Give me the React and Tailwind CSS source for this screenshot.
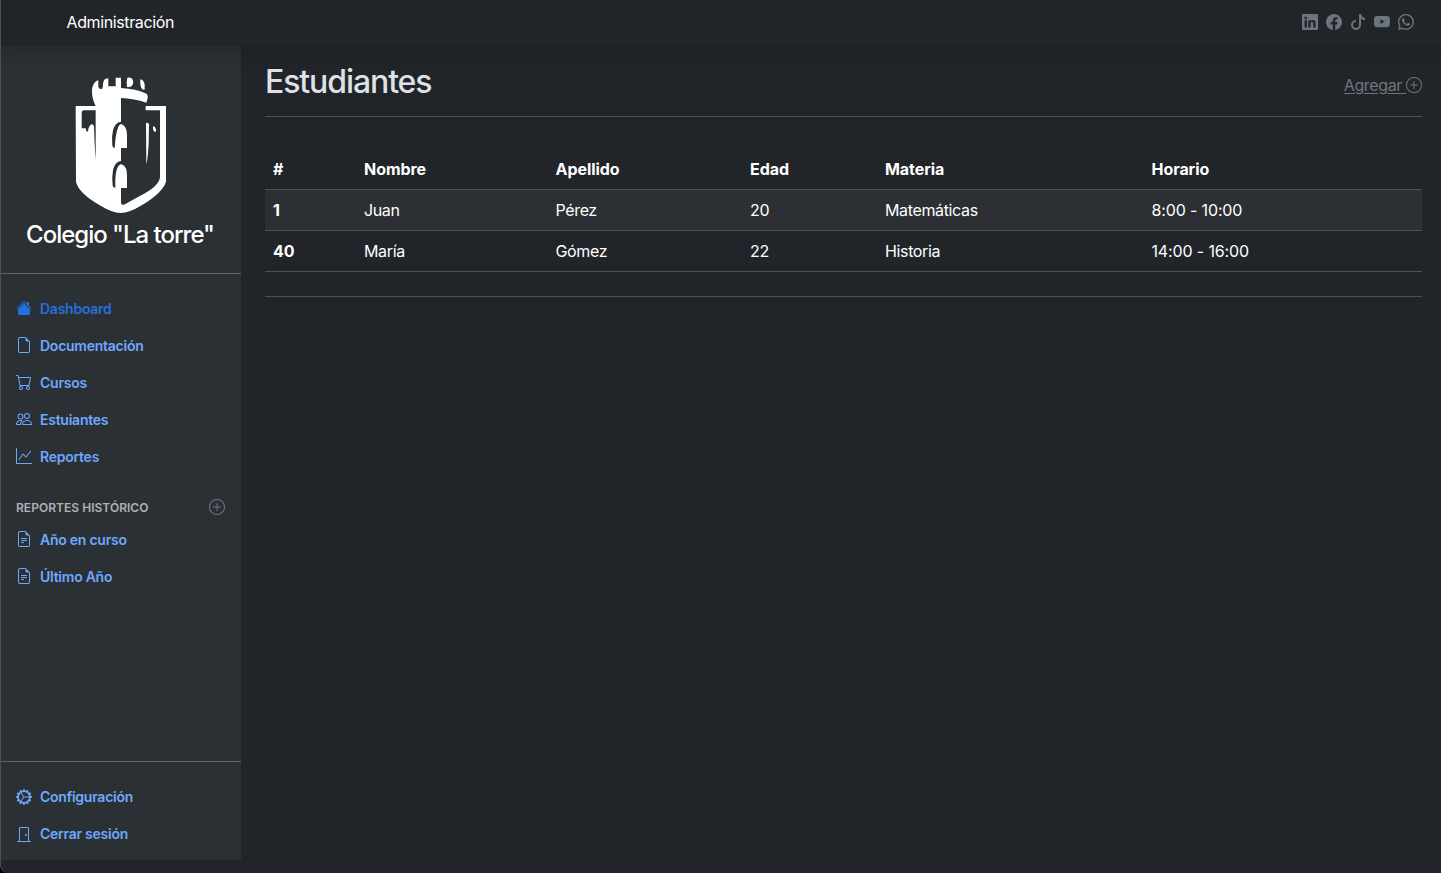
import {
  BsHouseFill, BsFileEarmark, BsCart, BsPeople, BsGraphUp, BsPlusCircle, BsFileEarmarkText,
  BsGearWideConnected, BsDoorClosed, BsLinkedin, BsFacebook, BsTiktok, BsYoutube, BsWhatsapp,
} from "react-icons/bs";

const mainLinks = [
  { label: "Dashboard", Icon: BsHouseFill, active: true },
  { label: "Documentación", Icon: BsFileEarmark },
  { label: "Cursos", Icon: BsCart },
  { label: "Estuiantes", Icon: BsPeople },
  { label: "Reportes", Icon: BsGraphUp },
];
const reportLinks = [
  { label: "Año en curso", Icon: BsFileEarmarkText },
  { label: "Último Año", Icon: BsFileEarmarkText },
];
const accountLinks = [
  { label: "Configuración", Icon: BsGearWideConnected },
  { label: "Cerrar sesión", Icon: BsDoorClosed },
];
const students = [
  ["1", "Juan", "Pérez", "20", "Matemáticas", "8:00 - 10:00"],
  ["40", "María", "Gómez", "22", "Historia", "14:00 - 16:00"],
];

function TowerLogo() {
  return (
    <svg viewBox="0 0 420 465" className="mr-[2px] h-[155px] w-[140px]" fill="#fff">
      <path d="M77 123H137C131 110 126 97 126 80C126 62 133 50 145 46V66Q148 73 155 73Q160 69 159 58Q160 43 168 41L175 40V64H197V38H213V69Q260 72 285 84Q295 88 293 100L289 113Q253 101 213 99V170Q195 172 189 196Q184 216 187 242Q190 250 194 249Q199 178 214 177Q231 184 231 210V249H213V288Q195 290 189 315Q185 340 188 362Q191 369 196 368Q194 298 215 298Q231 304 231 330V369H213V412Q213 424 226 417L268 394Q327 365 330 337V136H287V123H348V350Q338 383 275 421Q238 444 212 444Q187 444 148 420Q84 382 78 350Z" />
      <path fill="#2b3035" d="M101 136H137V285Q134 250 132 184Q128 174 121 180Q115 187 114 199Q109 204 107 190H95V144Q95 137 101 136Z" />
      <path d="M232 38Q246 35 249 47Q252 60 240 66H231Q228 52 232 38ZM271 43Q281 45 284 58V73Q279 78 273 67Q269 55 271 43ZM288 174Q292 171 297 177L296 235Q294 280 289 297ZM309 184Q315 183 318 193Q320 201 315 202Q308 197 309 184Z" />
    </svg>
  );
}

function NavList({ items, iconClass = "mb-0.5" }) {
  return (
    <ul className="flex flex-col">
      {items.map(({ label, Icon, active }) => (
        <li key={label}>
          <a href="#" className={`flex h-[37px] items-center gap-2 pr-4 pl-[15px] text-sm font-[560] tracking-[-0.25px] ${active ? "text-[#2470dc]" : "text-[#6ea8fe]"}`}>
            <Icon className={`size-4 shrink-0 ${iconClass}`} />
            <span>{label}</span>
          </a>
        </li>
      ))}
    </ul>
  );
}

export default function App() {
  return (
    <div className="h-[873px] w-full bg-black font-['Inter',sans-serif]">
      <div className="flex h-full flex-col overflow-hidden rounded-bl-lg border-l border-[#495057] bg-[#212529] text-white">
        <header className="relative z-10 flex h-[46px] shrink-0 items-center justify-between bg-[#212529] pr-[27px] pb-0.5 pl-[65.5px] shadow-[0_8px_16px_rgba(0,0,0,0.15)]">
          <span className="text-base tracking-[-0.38px]">Administración</span>
          <div className="flex gap-2 text-[#6c757d]">
            <BsLinkedin /><BsFacebook /><BsTiktok /><BsYoutube /><BsWhatsapp />
          </div>
        </header>
        <div className="flex min-h-0 flex-1">
          <aside className="flex h-[814px] w-60 shrink-0 flex-col bg-[#2b3035] pb-2">
            <div className="flex h-[228px] flex-col items-center border-b border-[#5f6467] pt-[18.5px]">
              <TowerLogo />
              <h2 className="-mt-px mr-0.5 text-2xl font-[540] tracking-[-1px]">Colegio "La torre"</h2>
            </div>
            <nav className="pt-4">
              <NavList items={mainLinks} />
              <h6 className="mt-6 mb-1 flex h-[18px] items-center justify-between pr-4 pl-[15px] text-xs font-[560] tracking-[0.03px] text-[#adb2b6]">
                <span className="uppercase">Reportes histórico</span>
                <BsPlusCircle className="mb-0.5 size-4 text-[#6c757d]" />
              </h6>
              <NavList items={reportLinks} />
            </nav>
            <div className="mt-auto border-t border-[#5f6467] pt-4">
              <NavList items={accountLinks} iconClass="mb-0" />
            </div>
          </aside>
          <main className="min-w-0 flex-1 pr-[19px] pl-6">
            <div className="flex h-[71px] items-center justify-between border-b border-[#495057]">
              <h1 className="mt-0.5 text-[32px] font-[540] tracking-[-1.1px] text-[#dee2e6]">Estudiantes</h1>
              <a href="#" className="mt-2 flex items-center text-base tracking-[-0.38px] text-[#6c757d]">
                <span className="whitespace-pre underline underline-offset-2">Agregar </span>
                <BsPlusCircle className="size-4" />
              </a>
            </div>
            <table className="mt-8 w-full table-fixed border-separate border-spacing-0 text-left text-base">
              <colgroup>
                <col className="w-[91px]" /><col className="w-[191.5px]" /><col className="w-[194.5px]" />
                <col className="w-[135px]" /><col className="w-[266.5px]" /><col />
              </colgroup>
              <thead>
                <tr>
                  {["#", "Nombre", "Apellido", "Edad", "Materia", "Horario"].map((h) => (
                    <th key={h} className="h-[41px] border-b border-[#4d5154] px-2 font-bold tracking-[-0.06px]">{h}</th>
                  ))}
                </tr>
              </thead>
              <tbody>
                {students.map(([id, ...cells]) => (
                  <tr key={id} className="odd:bg-[#2c3034]">
                    <th className="h-[41px] border-b border-[#4d5154] px-2 font-bold">{id}</th>
                    {cells.map((c, i) => (
                      <td key={c} className={`border-b border-[#4d5154] px-2 ${i === 4 ? "tracking-[-0.14px]" : "tracking-[-0.36px]"}`}>{c}</td>
                    ))}
                  </tr>
                ))}
              </tbody>
            </table>
            <hr className="mt-6 border-[#495057]" />
          </main>
        </div>
      </div>
    </div>
  );
}
